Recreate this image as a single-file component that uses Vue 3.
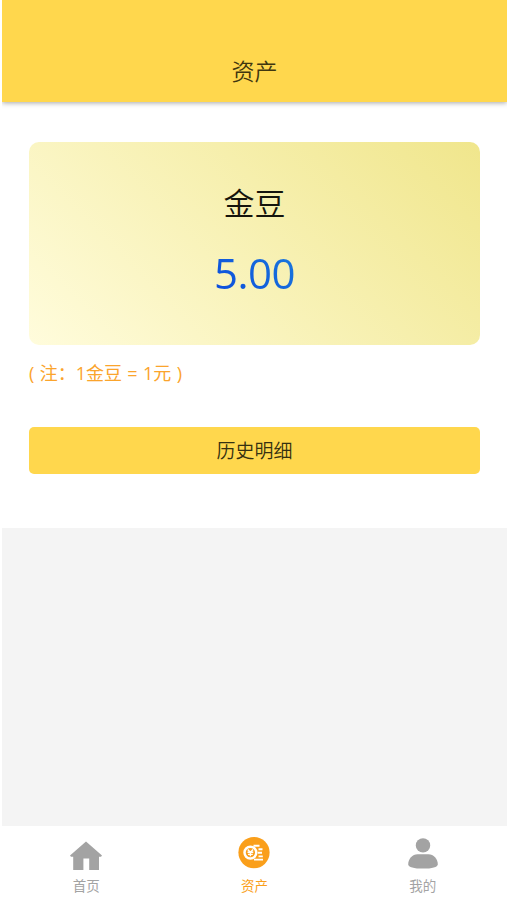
<template>
  <div class="page">
    <header class="header">
      <h1>资产</h1>
    </header>

    <main class="content">
      <section class="card">
        <p class="card-title">金豆</p>
        <p class="card-amount">{{ balance.toFixed(2) }}</p>
      </section>
      <p class="note">( 注：1金豆 = 1元 )</p>
      <button type="button" class="history-btn">历史明细</button>
    </main>

    <nav class="tabbar">
      <a
        v-for="tab in tabs"
        :key="tab.key"
        class="tab"
        :class="{ active: tab.key === current }"
        @click="current = tab.key"
      >
        <svg v-if="tab.key === 'home'" class="icon" viewBox="0 0 32 32">
          <path d="M16 4.4 32 18.4 31 19.8H29V33H19.2V21.5H13.4V33H3.2V19.8H1L0 18.4Z" />
        </svg>
        <svg v-else-if="tab.key === 'asset'" class="icon" viewBox="0 0 32 32">
          <circle cx="16" cy="15.6" r="15.6" />
          <g fill="none" stroke="#fff">
            <circle cx="12.4" cy="15.6" r="5.9" stroke-width="2.5" />
            <path d="M9.7 12.4 12.4 15.2 15.1 12.4M12.4 15.2V19.2M9.5 15.2H15.3M10 17.4H14.8" stroke-width="1.4" />
            <path d="M15.5 8.7H21.5M20.5 12.2H24.5M19.8 15.8H24M20.5 19.4H24.8M16 22.6H25" stroke-width="1.9" />
          </g>
        </svg>
        <svg v-else class="icon" viewBox="0 0 32 32">
          <circle cx="16" cy="8.4" r="7.2" />
          <path d="M10.5 17.3H21.5C26.5 17.3 30.8 22 30.8 27.4C30.8 29.8 25 31.6 16 31.6S1.2 29.8 1.2 27.4C1.2 22 5.5 17.3 10.5 17.3Z" />
        </svg>
        <span>{{ tab.label }}</span>
      </a>
    </nav>
  </div>
</template>

<script setup>
import { ref } from 'vue'

const balance = ref(5)
const current = ref('asset')

const tabs = [
  { key: 'home', label: '首页' },
  { key: 'asset', label: '资产' },
  { key: 'mine', label: '我的' }
]
</script>

<style>
body {
  margin: 0;
  background: #fff;
}
</style>

<style scoped>
.page {
  display: flex;
  flex-direction: column;
  height: 100vh;
  margin-left: 2px;
  background: #f4f4f4;
  font-family: "Open Sans", "Noto Sans CJK SC", sans-serif;
  overflow: hidden;
}

h1,
p {
  margin: 0;
  font-weight: 400;
}

.header {
  flex: none;
  display: flex;
  align-items: flex-end;
  justify-content: center;
  height: 102px;
  padding-bottom: 16px;
  box-sizing: border-box;
  background: #ffd74d;
  box-shadow: 0 1px 5px rgba(0, 0, 0, 0.35);
  z-index: 1;
}

.header h1 {
  font-size: 23px;
  font-weight: 350;
  line-height: 30px;
  color: #40360f;
}

.content {
  flex: none;
  height: 426px;
  padding: 40px 27px 0;
  box-sizing: border-box;
  background: #fff;
}

.card {
  height: 203px;
  padding-top: 39px;
  box-sizing: border-box;
  border-radius: 10px;
  background: linear-gradient(45deg, #fffcdc, #f0e68c);
  text-align: center;
}

.card-title {
  font-size: 31px;
  font-weight: 350;
  line-height: 44px;
  color: #15140c;
}

.card-amount {
  width: fit-content;
  margin: 18px auto 0;
  font-size: 42px;
  line-height: 60px;
  letter-spacing: -0.5px;
  color: transparent;
  background: linear-gradient(45deg, #0a48dc, #1c7cdc);
  background-clip: text;
}

.note {
  margin-top: 15px;
  font-size: 18px;
  line-height: 26px;
  word-spacing: 0.7px;
  color: #fba42c;
}

.history-btn {
  display: block;
  width: 100%;
  height: 47px;
  margin-top: 41px;
  padding: 0 0 1px;
  border: 0;
  border-radius: 5px;
  background: #ffd74d;
  font-family: inherit;
  font-size: 19px;
  font-weight: 350;
  color: #353111;
  cursor: pointer;
}

.tabbar {
  flex: none;
  display: flex;
  height: 74px;
  margin-top: auto;
  background: #fff;
}

.tab {
  flex: 1;
  display: flex;
  flex-direction: column;
  align-items: center;
  padding-top: 11px;
  color: #a3a3a3;
  cursor: pointer;
}

.tab.active {
  color: #fa9f1b;
}

.icon {
  width: 32px;
  height: 32px;
  fill: currentColor;
  overflow: visible;
}

.tab span {
  margin-top: 7px;
  font-size: 13.5px;
  line-height: 20px;
}
</style>
